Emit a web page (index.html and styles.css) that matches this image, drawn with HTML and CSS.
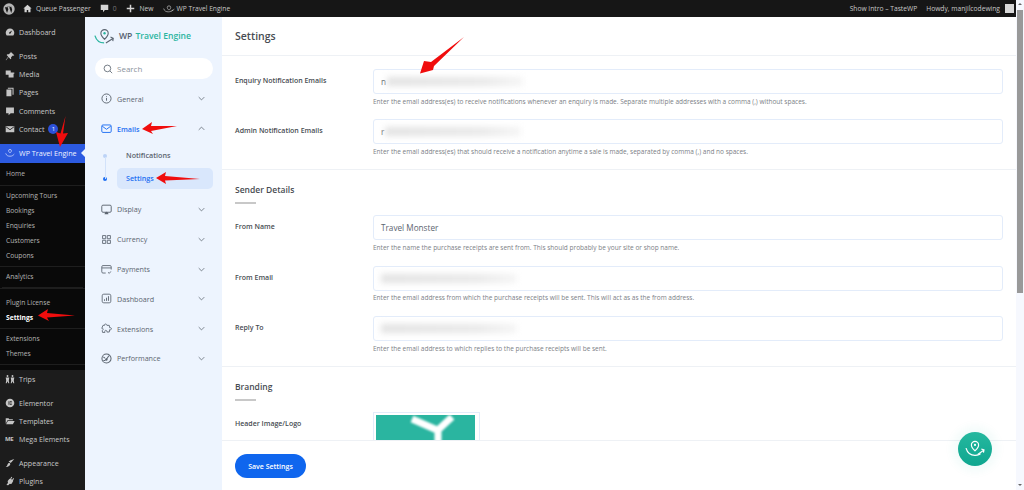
FILE: index.html
```html
<!DOCTYPE html>
<html lang="en">
<head>
<meta charset="utf-8">
<title>Settings - WP Travel Engine</title>
<link rel="stylesheet" href="styles.css">
</head>
<body>
<div class="window">
  <div class="page">
    <header class="topbar">
      <svg class="tb-wp" viewBox="0 0 20 20"><circle cx="10" cy="10" r="9.500" fill="#b4b4b4"/><path d="M3.200 7l3.500 9.700 2.200-6.200-1.300-3.500H6.500V6.200h5.200V7h-1.300l3.300 9.500 1.200-3.800c.6-1.800.2-2.900-.4-4-.5-.9-.8-1.600-.2-2.500" fill="#161616"/></svg>
      <span class="tb-item"><svg class="tb-ic" viewBox="0 0 12 12"><path d="M6 1L.5 6H2v5h3V8h2v3h3V6h1.500z" fill="#d4d4d4"/></svg>Queue Passenger</span>
      <span class="tb-item"><svg class="tb-ic" viewBox="0 0 12 12"><path d="M1 1h10v7H6.500L4 11V8H1z" fill="#d4d4d4"/></svg><span class="tb-dim">0</span></span>
      <span class="tb-item tb-new"><svg class="tb-ic" viewBox="0 0 12 12"><path d="M5 1h2v4h4v2H7v4H5V7H1V5h4z" fill="#d4d4d4"/></svg>New</span>
      <span class="tb-item tb-wte"><svg class="tb-ic tb-ic-wide" viewBox="0 0 18 12"><path d="M1 6c1 4 4 5 7 5s5-1 7-3M9 2a2.600 2.600 0 0 1 2.600 2.600C11.600 6.400 9 8.500 9 8.500S6.400 6.400 6.400 4.600A2.600 2.600 0 0 1 9 2zM13 10l4-3" fill="none" stroke="#c8c8c8"/></svg>WP Travel Engine</span>
      <span class="tb-right">Show Intro – TasteWP</span>
      <span class="tb-howdy">Howdy, manjilcodewing</span>
      <span class="tb-avatar"></span>
    </header>
    <div class="layout">
      <nav class="wpmenu">
        <a class="wm wm-first"><svg class="wm-ic" viewBox="0 0 14 14"><path d="M7 2a6 6 0 0 0-6 6c0 1.500.5 2.800 1.400 3.800h9.200A6 6 0 0 0 13 8a6 6 0 0 0-6-6zm0 7.500a1.300 1.300 0 0 1-.8-2.300L10 5 7.900 8.700A1.300 1.300 0 0 1 7 9.500z" fill="#c4c4c4"/></svg>Dashboard</a>
        <a class="wm wm-gap"><svg class="wm-ic" viewBox="0 0 14 14"><path d="M8 1l5 5-1 .6-1-.4-2.500 2.500.2 2-1 1L5 8.500 1.500 13 1 12.500 4.500 8 2.300 5.500l1-1 2 .2L8 2.200z" fill="#c4c4c4"/></svg>Posts</a>
        <a class="wm"><svg class="wm-ic" viewBox="0 0 14 14"><path d="M1 2h7v6H1zM5 5h8v1.500h-1V12H5z" fill="#c4c4c4"/></svg>Media</a>
        <a class="wm"><svg class="wm-ic" viewBox="0 0 14 14"><path d="M4 1h8v10h-1.500V2.500H4zM2 3.500h7V13H2z" fill="#c4c4c4"/></svg>Pages</a>
        <a class="wm"><svg class="wm-ic" viewBox="0 0 14 14"><path d="M1.500 2h11v8H8l-3 3v-3H1.500z" fill="#c4c4c4"/></svg>Comments</a>
        <a class="wm"><svg class="wm-ic" viewBox="0 0 14 14"><path d="M1 3h12v8.500H1z" fill="#c4c4c4"/><path d="M1.500 4L7 8l5.500-4" fill="none" stroke="#1a1a1a" stroke-width="1.200"/></svg>Contact<span class="wm-badge">1</span></a>
        <a class="wm wm-active"><svg class="wm-ic" viewBox="0 0 14 14"><path d="M1 7.500c1 3 3 4 6 4s4-1 6-3M7 2a2 2 0 0 1 2 2C9 5.400 7 7 7 7S5 5.400 5 4a2 2 0 0 1 2-2z" fill="none" stroke="#dde4ff"/></svg>WP Travel Engine</a>
        <div class="wm-sub">
          <a class="ws ws-home">Home</a>
          <div class="ws-group">
            <a class="ws">Upcoming Tours</a>
            <a class="ws">Bookings</a>
            <a class="ws">Enquiries</a>
            <a class="ws">Customers</a>
            <a class="ws">Coupons</a>
          </div>
          <div class="ws-group"><a class="ws">Analytics</a></div>
          <div class="ws-group ws-double">
            <a class="ws">Plugin License</a>
            <a class="ws ws-on">Settings</a>
          </div>
          <div class="ws-group ws-last">
            <a class="ws">Extensions</a>
            <a class="ws">Themes</a>
          </div>
        </div>
        <a class="wm"><svg class="wm-ic" viewBox="0 0 14 14"><path d="M3.500 1.500a1.300 1.300 0 1 1 0 2.600 1.300 1.300 0 0 1 0-2.600zm7 0a1.300 1.300 0 1 1 0 2.600 1.300 1.300 0 0 1 0-2.600zM1 5h5l-.7 4 .7 4H4.700L3.500 10l-1.200 3H1l.7-4zm7 0h5l-.7 4 .7 4h-1.300l-1.200-3-1.200 3H8l.7-4z" fill="#c4c4c4"/></svg>Trips</a>
        <a class="wm wm-gap"><svg class="wm-ic" viewBox="0 0 14 14"><circle cx="7" cy="7" r="6" fill="#c4c4c4"/><rect x="5" y="4.500" width="1.200" height="5" fill="#1a1a1a"/><rect x="7" y="4.500" width="2.500" height="1" fill="#1a1a1a"/><rect x="7" y="6.500" width="2.500" height="1" fill="#1a1a1a"/><rect x="7" y="8.500" width="2.500" height="1" fill="#1a1a1a"/></svg>Elementor</a>
        <a class="wm"><svg class="wm-ic" viewBox="0 0 14 14"><path d="M1 3h4l1 1.500h5V6H3.500L1 11zM4 7h9.500L11 11.500H1.500z" fill="#c4c4c4"/></svg>Templates</a>
        <a class="wm"><span class="wm-me">ME</span>Mega Elements</a>
        <a class="wm wm-gap"><svg class="wm-ic" viewBox="0 0 14 14"><path d="M13 1.500L8 7 5 5l3-2zM6.500 7l1 1.500C7 11 4 13 1 12.500c1.500-1 2-2 2.500-3.500C4 7.500 5 6.500 6.500 7z" fill="#c4c4c4"/></svg>Appearance</a>
        <a class="wm"><svg class="wm-ic" viewBox="0 0 14 14"><path d="M9 1l1.200.8L8.500 4.300l1.400 1 1.800-2.400 1 .8L11 6.200l.7.6-2 3.200c-.9 1.200-2 1.300-3 1L4.500 13 2 12.500l2.300-3.200c-.6-.9-.8-2 0-3.100L6.300 3.700l.8.500z" fill="#c4c4c4"/></svg>Plugins</a>
      </nav>

      <aside class="side">
        <div class="logo">
          <svg class="logo-ic" viewBox="0 0 24 18"><path d="M1 8c1.500 5 5 8 10 8" fill="none" stroke="#2ab5a0" stroke-width="1.400"/><path d="M11.500 1.500a4 4 0 0 1 4 4c0 2.800-4 6.500-4 6.500s-4-3.700-4-6.500a4 4 0 0 1 4-4z" fill="none" stroke="#5a6470" stroke-width="1.200"/><circle cx="11.500" cy="5.500" r="1.300" fill="#2ab5a0"/><path d="M13 16l8-5M18 9.500l3 1.500-.5 3" fill="none" stroke="#5a6470" stroke-width="1.200"/></svg>
          <span class="logo-wp">WP</span><span class="logo-te">Travel Engine</span>
        </div>
        <div class="search">
          <svg class="search-ic" viewBox="0 0 12 12"><circle cx="5.300" cy="5.300" r="4" fill="none" stroke="#5c6570" stroke-width="1"/><path d="M8.300 8.300l2.700 2.700" stroke="#5c6570" stroke-width="1"/></svg>
          <span>Search</span>
        </div>
        <div class="sn">
          <svg class="sn-ic" viewBox="0 0 14 14"><circle cx="7" cy="7" r="5.800" fill="none" stroke="#5c6570" stroke-width="1.200"/><path d="M7 6.300v3.500M7 4.200v1" stroke="#5c6570" stroke-width="1.200"/></svg>
          <span class="sn-t">General</span>
          <svg class="sn-ch" viewBox="0 0 10 6"><path d="M1 1l4 4 4-4" fill="none" stroke="#5c6570" stroke-width="1.100"/></svg>
        </div>
        <div class="sn sn-on">
          <svg class="sn-ic" viewBox="0 0 14 14"><rect x="1" y="2.500" width="12" height="9.500" rx="1.500" fill="none" stroke="#1f6ff2" stroke-width="1.200"/><path d="M1.500 4l5.500 4 5.500-4" fill="none" stroke="#1f6ff2" stroke-width="1.200"/></svg>
          <span class="sn-t">Emails</span>
          <svg class="sn-ch" viewBox="0 0 10 6"><path d="M1 5l4-4 4 4" fill="none" stroke="#5c6570" stroke-width="1.100"/></svg>
        </div>
        <div class="steps">
          <div class="step">
            <span class="step-dot"></span>
            <span class="step-t">Notifications</span>
          </div>
          <div class="step step-on">
            <span class="step-dot"></span>
            <span class="step-t">Settings</span>
          </div>
        </div>
        <div class="sn">
          <svg class="sn-ic" viewBox="0 0 14 14"><rect x="1" y="1.500" width="12" height="9" rx="1.500" fill="none" stroke="#5c6570" stroke-width="1.200"/><path d="M4.500 13c.5-2 1.500-3 2.500-3s2 1 2.500 3z" fill="#5c6570"/></svg>
          <span class="sn-t">Display</span>
          <svg class="sn-ch" viewBox="0 0 10 6"><path d="M1 1l4 4 4-4" fill="none" stroke="#5c6570" stroke-width="1.100"/></svg>
        </div>
        <div class="sn">
          <svg class="sn-ic" viewBox="0 0 14 14"><path d="M2 2h4v4H2zM8 2h4v4H8zM2 8h4v4H2zM8 8h4v4H8z" fill="none" stroke="#5c6570" stroke-width="1.100"/></svg>
          <span class="sn-t">Currency</span>
          <svg class="sn-ch" viewBox="0 0 10 6"><path d="M1 1l4 4 4-4" fill="none" stroke="#5c6570" stroke-width="1.100"/></svg>
        </div>
        <div class="sn">
          <svg class="sn-ic" viewBox="0 0 14 14"><path d="M6 11.500H2.500a1.500 1.500 0 0 1-1.500-1.500V3.500A1.500 1.500 0 0 1 2.500 2h9A1.500 1.500 0 0 1 13 3.500V7M1 5h12M9 10.500l1.500 1.500 2-2.500" fill="none" stroke="#5c6570" stroke-width="1.100"/></svg>
          <span class="sn-t">Payments</span>
          <svg class="sn-ch" viewBox="0 0 10 6"><path d="M1 1l4 4 4-4" fill="none" stroke="#5c6570" stroke-width="1.100"/></svg>
        </div>
        <div class="sn">
          <svg class="sn-ic" viewBox="0 0 14 14"><rect x="1.500" y="1.500" width="11" height="11" rx="2" fill="none" stroke="#5c6570" stroke-width="1.100"/><path d="M4.500 10V8M7 10V6M9.500 10V4" stroke="#5c6570" stroke-width="1.200"/></svg>
          <span class="sn-t">Dashboard</span>
          <svg class="sn-ch" viewBox="0 0 10 6"><path d="M1 1l4 4 4-4" fill="none" stroke="#5c6570" stroke-width="1.100"/></svg>
        </div>
        <div class="sn">
          <svg class="sn-ic" viewBox="0 0 14 14"><path d="M5 1.500c1.200-.6 2.500.2 2.500 1.500h3l.5 3c1.500-.3 2.500.5 2.300 1.500-.2 1-1.300 1.500-2.300 1l-.5 3h-3c.3-1.500-.5-2.200-1.500-2.200S4.500 10.500 5 12H2l-.5-2.500C2.500 9 3 8.200 2.700 7.500 2.400 6.700 1.500 6.500 1 6.800L2.500 3H4.500c-.3-.6 0-1.200.5-1.500z" fill="none" stroke="#5c6570" stroke-width="1.100"/></svg>
          <span class="sn-t">Extensions</span>
          <svg class="sn-ch" viewBox="0 0 10 6"><path d="M1 1l4 4 4-4" fill="none" stroke="#5c6570" stroke-width="1.100"/></svg>
        </div>
        <div class="sn">
          <svg class="sn-ic" viewBox="0 0 14 14"><circle cx="7" cy="7" r="5.800" fill="none" stroke="#5c6570" stroke-width="1.300"/><path d="M7 8l3-4.500M3 5l2 1.500M3 9.500h2.500" stroke="#5c6570" stroke-width="1.300" fill="none"/><circle cx="6.800" cy="8.300" r="1.500" fill="#5c6570"/></svg>
          <span class="sn-t">Performance</span>
          <svg class="sn-ch" viewBox="0 0 10 6"><path d="M1 1l4 4 4-4" fill="none" stroke="#5c6570" stroke-width="1.100"/></svg>
        </div>
      </aside>

      <main class="main">
        <div class="scroll">
          <h1 class="title">Settings</h1>
          <section class="sec sec-first">
            <div class="row">
              <label class="lab">Enquiry Notification Emails</label>
              <div class="fld">
                <div class="inp"><span class="ch">n</span><span class="smear"></span></div>
                <p class="help">Enter the email address(es) to receive notifications whenever an enquiry is made. Separate multiple addresses with a comma (,) without spaces.</p>
              </div>
            </div>
            <div class="row">
              <label class="lab">Admin Notification Emails</label>
              <div class="fld">
                <div class="inp"><span class="ch">r</span><span class="smear"></span></div>
                <p class="help">Enter the email address(es) that should receive a notification anytime a sale is made, separated by comma (,) and no spaces.</p>
              </div>
            </div>
          </section>
          <section class="sec sec-mid">
            <h2 class="sub">Sender Details</h2>
            <div class="row">
              <label class="lab">From Name</label>
              <div class="fld">
                <div class="inp">Travel Monster</div>
                <p class="help">Enter the name the purchase receipts are sent from. This should probably be your site or shop name.</p>
              </div>
            </div>
            <div class="row">
              <label class="lab">From Email</label>
              <div class="fld">
                <div class="inp"><span class="smear"></span></div>
                <p class="help">Enter the email address from which the purchase receipts will be sent. This will act as as the from address.</p>
              </div>
            </div>
            <div class="row">
              <label class="lab">Reply To</label>
              <div class="fld">
                <div class="inp"><span class="smear"></span></div>
                <p class="help">Enter the email address to which replies to the purchase receipts will be sent.</p>
              </div>
            </div>
          </section>
          <section class="sec">
            <h2 class="sub">Branding</h2>
            <div class="row">
              <label class="lab">Header Image/Logo</label>
              <div class="fld">
                <div class="thumb">
                  <div class="thumb-in"><svg class="thumb-y" viewBox="0 0 99 30"><path d="M36 4l25 11M76 2L62 15v12" fill="none" stroke="#fff" stroke-width="7"/></svg></div>
                </div>
              </div>
            </div>
          </section>
        </div>
        <footer class="foot"><button class="save">Save Settings</button></footer>
      </main>
    </div>
  </div>
  <div class="sbar"><span class="sbar-up"></span><span class="sbar-thumb"></span><span class="sbar-dn"></span></div>
</div>

<a class="fab"><svg viewBox="0 0 24 20"><path d="M2 9c1.500 5 5 8 10 8s6-2 6-2" fill="none" stroke="#fff" stroke-width="1.400"/><path d="M12 1.500a4 4 0 0 1 4 4c0 2.800-4 6.500-4 6.500S8 8.300 8 5.500a4 4 0 0 1 4-4z" fill="none" stroke="#fff" stroke-width="1.300"/><circle cx="12" cy="5.500" r="1.200" fill="#fff"/><path d="M15 16l7-5M19 10l3 1-.6 3" fill="none" stroke="#fff" stroke-width="1.300"/></svg></a>

<svg class="arrows" viewBox="0 0 1024 490">
  <g fill="#f00d0d">
    <path d="M65.500 116L63 133.500 68 133 60 147 56 132 60.500 133.500z"/>
    <path d="M142 129L152 122 151 126 177 126 151 131 153 134z"/>
    <path d="M156 178L166 172 165 176 200 179 165 180.500 166 184z"/>
    <path d="M38 315.500L48 309 47 313 75 315.500 47 317.500 49 321z"/>
    <path d="M464 37L431 62 424 61 420 73.500 433 70 434 66z"/>
  </g>
</svg>
</body>
</html>
```
FILE: styles.css
```css
* { box-sizing: border-box; }
html, body { margin: 0; height: 490px; overflow: hidden; }
body { font-family: "Open Sans", "Noto Sans", sans-serif; background: #fff; position: relative; }
svg { display: block; flex: none; }
p, h1, h2 { margin: 0; }

.window { display: flex; width: 1024px; height: 490px; }
.page { width: 1016px; height: 490px; display: flex; flex-direction: column; }

.topbar { height: 17px; background: #161616; display: flex; align-items: center; padding-left: 3px; color: #c8c8c8; font-size: 6.700px; }
.tb-wp { width: 12px; height: 12px; margin-right: 8px; }
.tb-item { display: flex; align-items: center; gap: 4px; margin-right: 9px; }
.tb-new { gap: 5px; }
.tb-wte { gap: 2px; }
.tb-ic { width: 9px; height: 9px; }
.tb-ic-wide { width: 12px; }
.tb-dim { color: #777; }
.tb-right { margin-left: auto; }
.tb-howdy { margin-left: 9px; }
.tb-avatar { width: 9px; height: 9px; margin: 0 2px 0 5px; background: #d8d8d8; }

.layout { flex: 1; min-height: 0; display: flex; }

.wpmenu { width: 85px; background: #1c1c1c; color: #c8c8c8; font-size: 7.100px; display: flex; flex-direction: column; flex: none; overflow: hidden; }
.wm { display: flex; align-items: center; height: 18.200px; padding-left: 5px; flex: none; }
.wm-first { margin-top: 6px; }
.wm-gap { margin-top: 5.800px; }
.wm-ic { width: 10px; height: 10px; margin-right: 4px; }
.wm-me { width: 10px; margin-right: 4px; font-size: 6px; font-weight: 700; letter-spacing: -.5px; color: #c4c4c4; }
.wm-badge { width: 10px; height: 10px; margin-left: 4px; border-radius: 50%; background: #2c50d8; color: #fff; font-size: 6px; display: flex; align-items: center; justify-content: center; }
.wm-active { position: relative; margin-top: 5.800px; height: 19px; background: #2c5ae0; color: #f0f3ff; font-size: 7.200px; }
.wm-active::after { content: ""; position: absolute; right: 0; top: 5px; border: 4.500px solid transparent; border-right-color: #edf4fe; border-left-width: 0; }
.wm-sub { background: #090909; font-size: 6.700px; color: #b4b4b4; flex: none; height: 207px; display: flex; flex-direction: column; }
.ws { display: flex; align-items: center; height: 15px; padding-left: 6px; }
.ws-home { height: 21px; margin-bottom: 1px; }
.ws-group { border-top: 1px solid #1e1e1e; padding: 2.500px 0; }
.ws-double { padding-top: 6.500px; margin-top: 1px; box-shadow: 0 -3px 0 -2px #1e1e1e; }
.ws-last { border-bottom: 1px solid #1e1e1e; }
.ws-on { color: #fff; font-weight: 700; }

.side { width: 137px; background: #edf4fe; flex: none; padding: 0 9px 0 10px; color: #5c6570; font-size: 7.200px; }
.logo { display: flex; align-items: center; height: 38px; margin-left: -1px; font-size: 8.600px; font-weight: 600; }
.logo-ic { width: 22px; height: 17px; margin-right: 3px; }
.logo-wp { color: #566070; margin-right: 3px; }
.logo-te { color: #2ab5a0; }
.search { display: flex; align-items: center; height: 21px; margin-top: 3px; background: #fff; border-radius: 11px; padding-left: 8px; font-size: 8px; color: #8a929c; gap: 4px; }
.search-ic { width: 10px; height: 10px; }
.sn { display: flex; align-items: center; height: 29.800px; padding: 0 8px 0 6px; font-weight: 500; }
.search + .sn { margin-top: 5px; }
.sn-ic { width: 11px; height: 11px; margin-right: 5px; }
.sn-t { flex: 1; }
.sn-ch { width: 7px; height: 5px; }
.sn-on .sn-t { color: #1f6ff2; font-weight: 600; }
.steps { position: relative; display: flex; flex-direction: column; margin: 1px 0 5px; }
.step { display: flex; align-items: center; height: 22px; font-weight: 600; }
.step + .step { margin-top: 1px; }
.step-dot { width: 4px; height: 4px; border-radius: 50%; background: #bcd3f7; margin-left: 8px; margin-right: 10px; flex: none; }
.step-t { flex: 1; padding-left: 9px; line-height: 21px; border-radius: 5px; }
.step-on .step-dot { background: #1f6ff2; }
.step-on .step-t { background: #d9e7fc; color: #1f6ff2; }
.steps::before { content: ""; position: absolute; left: 10px; top: 12px; height: 22px; width: 1px; background: #d2e2fa; }

.main { flex: 1; min-width: 0; display: flex; flex-direction: column; background: #fff; }
.scroll { height: 423px; overflow: hidden; }
.title { height: 38px; padding: 0 13px; display: flex; align-items: center; font-size: 10.500px; font-weight: 600; color: #484c52; }
.sec { border-top: 1px solid #eef1f5; padding: 13px 13px 0; }
.sec-first { height: 114px; }
.sec-first .row { height: 50px; }
.sec-mid { height: 197px; }
.sub { font-size: 8.500px; font-weight: 600; color: #484c52; line-height: 14px; padding-bottom: 7px; margin: 0 0 11px; position: relative; }
.sub::after { content: ""; position: absolute; left: 0; bottom: 0; width: 21px; height: 2px; background: #c8c8c8; }
.row { display: flex; height: 50.500px; }
.lab { width: 138px; flex: none; font-size: 7px; font-weight: 600; color: #484c52; line-height: 24px; }
.fld { flex: 1; min-width: 0; }
.inp { height: 25px; display: flex; align-items: center; padding-left: 7px; border: 1px solid #e3ecfa; border-radius: 3px; font-size: 8.200px; color: #5c6570; }
.ch { margin-right: 1px; }
.smear { width: 136px; height: 9px; background: linear-gradient(90deg, #e2e2e2, #e8e8e8 70%, #f5f5f5); filter: blur(3px); }
.help { margin-top: 2.500px; font-size: 6.500px; line-height: 10px; color: #7c8086; white-space: nowrap; }
.thumb { width: 107px; height: 60px; border: 1px solid #e3ecfa; padding: 2px 4px 2px 2px; }
.thumb-in { height: 100%; background: #2ab5a0; }
.thumb-y { width: 99px; height: 30px; filter: blur(.8px); }

.foot { height: 50px; border-top: 1px solid #eef1f5; padding: 13px 13px 0; }
.save { display: block; width: 71px; height: 24px; border: 0; border-radius: 12px; background: #0f66ee; color: #fff; font: 600 7px "Open Sans", sans-serif; }

.sbar { width: 8px; height: 490px; background: #f6f8fe; display: flex; flex-direction: column; align-items: center; }
.sbar-up { margin-top: 3px; border: 2.500px solid transparent; border-bottom-color: #666; border-top-width: 0; }
.sbar-thumb { width: 6px; height: 283px; background: #999; margin-top: 4.500px; }
.sbar-dn { margin-top: auto; margin-bottom: 4px; border: 2.500px solid transparent; border-top-color: #666; border-bottom-width: 0; }

.fab { position: absolute; left: 958px; top: 432px; width: 34px; height: 34px; border-radius: 50%; background: linear-gradient(#25b89f, #0fa68f); box-shadow: 0 0 8px 6px rgba(28,174,151,.05); display: flex; align-items: center; justify-content: center; }
.fab svg { width: 22px; height: 18px; }
.arrows { position: absolute; left: 0; top: 0; width: 1024px; height: 490px; pointer-events: none; }
```
